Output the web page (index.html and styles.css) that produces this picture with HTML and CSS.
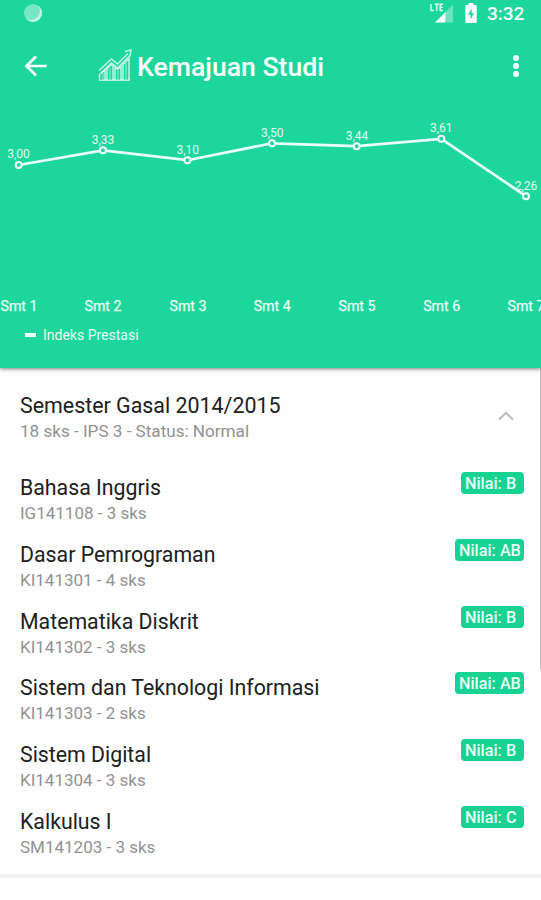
FILE: index.html
```html
<!DOCTYPE html>
<html lang="id">
<head>
<meta charset="utf-8">
<title>Kemajuan Studi</title>
<link rel="stylesheet" href="styles.css">
</head>
<body>
<header class="top">
  <div class="status">
    <span class="spinner"></span>
    <svg class="signal" width="25" height="24" viewBox="0 0 25 24">
      <path d="M2 4v6.500h3M5.500 4.300h4.500M7.800 4.300v6.500M14 4.200H11.200v6.300H14M11.200 7.300h2.500" fill="none" stroke="#fff" stroke-opacity=".85" stroke-width="1.500"/>
      <path d="M16.500 12 24 4.500V22.500H16.500Z" fill="#fff" fill-opacity=".35"/>
      <path d="M6 22.500 L16.500 12V22.500Z" fill="#fff"/>
    </svg>
    <svg class="battery" width="12" height="21" viewBox="0 0 12 21">
      <path d="M3.500 0h5v2H10.500a1.200 1.200 0 0 1 1.200 1.200v15.600a1.200 1.200 0 0 1-1.200 1.200h-9a1.200 1.200 0 0 1-1.200-1.200V3.200A1.200 1.200 0 0 1 1.500 2h2z" fill="#fff"/>
      <path d="M6.700 5.500 3 11.800h2.400v4.700L9 10.200H6.700z" fill="#1dd69b"/>
    </svg>
    <span class="clock">3:32</span>
  </div>
  <div class="bar">
    <svg class="back" width="24" height="22" viewBox="0 0 24 22" fill="none" stroke="#fff" stroke-width="2.700"><path d="M22.500 11H3M12 1.500 2.500 11 12 20.500"/></svg>
    <svg class="logo" width="35" height="33" viewBox="0 0 35 33" fill="none" stroke="#fff" stroke-opacity=".72" stroke-width="1.500">
      <path d="M1 21.500 13.500 10l6 5L30 4.500M3 24 13.500 14l6 5L32 6.500M27 2.500l6-1.500-1 6.500"/>
      <path d="M1.500 31V25.500L7 21v10M9 31V19.500l4.500-4L15 17v14M17 31V18.500l2.500 2L23 17.500V31M25 31V15.500l6-6V31"/>
      <path d="M1 31.200h31"/>
      <path d="M5 24v6M12 19v11M20 22v8M28 14v16" stroke-opacity=".4"/>
    </svg>
    <h1>Kemajuan Studi</h1>
    <svg class="more" width="8" height="24" viewBox="0 0 8 24" fill="#fff"><circle cx="4" cy="4" r="3"/><circle cx="4" cy="12" r="3"/><circle cx="4" cy="20" r="3"/></svg>
  </div>
  <svg class="chart" width="541" height="220" viewBox="0 100 541 220">
    <polyline class="line" points="18.700,165 103,150.300 187.500,160.200 272,143.300 356.700,146.200 441.300,138.800 526,196.200"/>
    <g class="dots">
      <circle cx="18.700" cy="165" r="3"/><circle cx="103" cy="150.300" r="3"/><circle cx="187.500" cy="160.200" r="3"/><circle cx="272" cy="143.300" r="3"/><circle cx="356.700" cy="146.200" r="3"/><circle cx="441.300" cy="138.800" r="3"/><circle cx="526" cy="196.200" r="3"/>
    </g>
    <g class="values">
      <text x="18.500" y="158.200">3,00</text><text x="103" y="143.700">3,33</text><text x="187.700" y="153.700">3,10</text><text x="272.200" y="136.700">3,50</text><text x="357" y="139.500">3,44</text><text x="441.300" y="132.200">3,61</text><text x="526" y="189.500">2,26</text>
    </g>
    <g class="months">
      <text x="19" y="311">Smt 1</text><text x="103" y="311">Smt 2</text><text x="188" y="311">Smt 3</text><text x="272.200" y="311">Smt 4</text><text x="357" y="311">Smt 5</text><text x="441.700" y="311">Smt 6</text><text x="526" y="311">Smt 7</text>
    </g>
  </svg>
  <div class="legend"><span class="dash"></span>Indeks Prestasi</div>
</header>
<main class="card">
  <section class="semester">
    <div>
      <h2>Semester Gasal 2014/2015</h2>
      <p class="summary">18 sks - IPS 3 - Status: Normal</p>
    </div>
    <svg class="chevron" width="16" height="10" viewBox="0 0 16 10" fill="none" stroke="#b9b9b9" stroke-width="1.900"><path d="M1 8.500 8 1.800l7 6.700"/></svg>
  </section>
  <ul>
    <li><div><h3>Bahasa Inggris</h3><p>IG141108 - 3 sks</p></div><span class="grade">Nilai: B</span></li>
    <li><div><h3>Dasar Pemrograman</h3><p>KI141301 - 4 sks</p></div><span class="grade double">Nilai: AB</span></li>
    <li><div><h3>Matematika Diskrit</h3><p>KI141302 - 3 sks</p></div><span class="grade">Nilai: B</span></li>
    <li><div><h3>Sistem dan Teknologi Informasi</h3><p>KI141303 - 2 sks</p></div><span class="grade double">Nilai: AB</span></li>
    <li><div><h3>Sistem Digital</h3><p>KI141304 - 3 sks</p></div><span class="grade">Nilai: B</span></li>
    <li><div><h3>Kalkulus I</h3><p>SM141203 - 3 sks</p></div><span class="grade">Nilai: C</span></li>
  </ul>
  <span class="scrollbar"></span>
</main>
</body>
</html>
```
FILE: styles.css
```css
* { box-sizing: border-box; margin: 0; padding: 0; }
body { height: 900px; overflow: hidden; background: #fefefe; font-family: Roboto, "Liberation Sans", sans-serif; color: #202020; }
.top { position: relative; z-index: 1; height: 368px; background: #1dd69b; color: #fff; box-shadow: 0 1px 4px rgba(0, 0, 0, .5); }
.status { display: flex; height: 32px; padding: 0 17px 0 24px; }
.spinner { width: 18px; height: 18px; margin-top: 4px; border-radius: 50%; background: #77e6c2; box-shadow: inset -2px -2px 1px #c5f5e5; }
.signal { margin: 0 0 0 auto; }
.battery { margin: 3px 0 0 11px; }
.clock { width: 37px; margin-left: 10px; font-size: 19px; font-weight: 500; line-height: 28px; white-space: nowrap; }
.bar { display: flex; align-items: center; height: 68px; padding: 0 21px 0 24px; }
.logo { margin: -1px 0 0 50px; }
h1 { margin-left: 4px; font-size: 26.6px; font-weight: 500; line-height: 34px; padding-top: 2px; }
.more { margin-left: auto; }
.chart { display: block; }
.line { fill: none; stroke: #e9fff7; stroke-width: 2.7; }
.dots { fill: #1dd69b; stroke: #f4fffb; stroke-width: 2; }
.values { fill: #e0fbf1; font-size: 12px; text-anchor: middle; }
.months { fill: #e8fcf5; stroke: #e8fcf5; stroke-width: .25; font-size: 14.2px; text-anchor: middle; }
.legend { display: flex; align-items: center; gap: 7px; height: 30px; padding-left: 25px; font-size: 14px; color: #e8fcf5; }
.dash { width: 11px; height: 4px; background: #effff9; }
.card { position: relative; height: 510px; border-bottom: 4px solid #f3f3f3; }
.semester { display: flex; justify-content: space-between; align-items: flex-start; height: 96px; padding: 25px 27px 0 20px; }
.chevron { margin-top: 18px; }
h2, h3 { font-size: 21.3px; font-weight: 400; line-height: 26px; white-space: nowrap; }
h2 { font-size: 21.4px; }
p { font-size: 17px; line-height: 25px; color: #929292; }
.summary { font-size: 17.1px; }
ul { list-style: none; }
li { display: flex; justify-content: space-between; align-items: flex-start; height: 66.8px; padding: 11px 17px 0 20px; }
.grade { width: 63px; height: 22px; margin-top: -3px; padding-left: 4px; border-radius: 4px; background: #17d291; color: #e9fff7; font-size: 16.2px; font-weight: 500; line-height: 23px; white-space: nowrap; }
.double { width: 69px; }
.scrollbar { position: absolute; top: 0; right: 0; width: 1px; height: 301px; background: #bdbdbd; }
```
